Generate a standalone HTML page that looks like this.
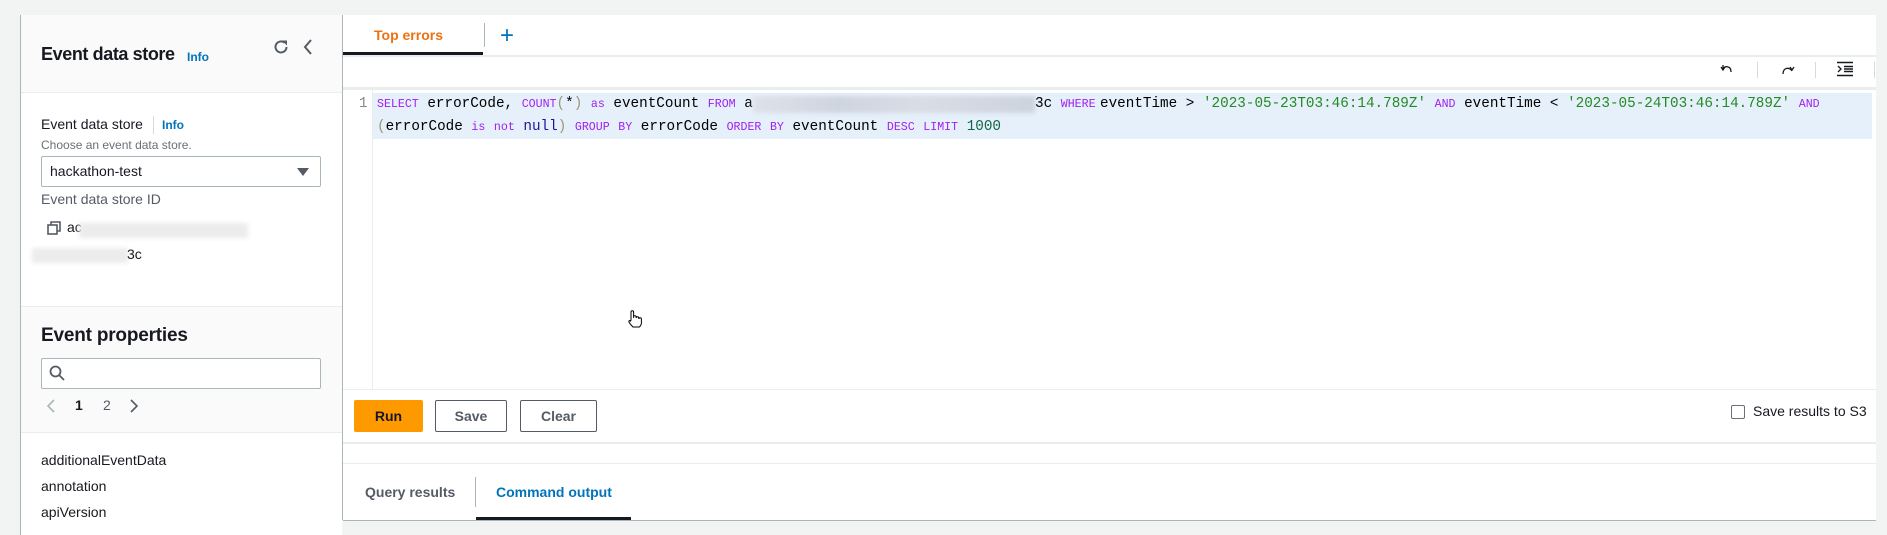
<!DOCTYPE html>
<html><head><meta charset="utf-8"><style>
*{box-sizing:border-box;margin:0;padding:0}
body{width:1887px;height:524px;background:#f2f3f3;position:relative;overflow:hidden;font-family:"Liberation Sans",sans-serif;color:#16191f}
.a{position:absolute;white-space:nowrap}
.mono{font-family:"Liberation Mono",monospace;font-size:14.3px;color:#000}
.k{color:#a020f0;font-size:11.6px;font-family:"Liberation Mono",monospace}
.s{color:#228b22}
.n{color:#116644}
.blur{position:absolute;background:linear-gradient(90deg,#dde2ea,#cfd5df 30%,#d8dde6 60%,#cdd3dd);filter:blur(2px)}
.btn{position:absolute;height:32px;border:1px solid #545b64;border-radius:2px;background:#fff;font-weight:bold;font-size:14px;color:#545b64;display:flex;align-items:center;justify-content:center}
</style></head><body>
<!-- left panel -->
<div class="a" style="left:20px;top:15px;width:322px;height:520px;background:#fff;border-left:1px solid #aab7b8"></div>
<div class="a" style="left:21px;top:15px;width:321px;height:78px;background:#fafafa;border-bottom:1px solid #eaeded"></div>
<div class="a" style="left:41px;top:44px;font-size:18px;font-weight:bold;letter-spacing:-0.4px">Event data store</div>
<div class="a" style="left:187px;top:50px;font-size:12px;font-weight:bold;color:#0073bb">Info</div>
<svg class="a" style="left:272px;top:38px" width="18" height="18" viewBox="0 0 18 18"><path d="M14.5 9A5.5 5.5 0 1 1 12.5 4.7" fill="none" stroke="#545b64" stroke-width="2"/><path d="M10 2.5h5v5z" fill="#545b64"/></svg>
<svg class="a" style="left:302px;top:38px" width="12" height="18" viewBox="0 0 12 18"><path d="M9 2L3 9l6 7" fill="none" stroke="#545b64" stroke-width="2"/></svg>
<div class="a" style="left:41px;top:116px;font-size:14px">Event data store</div>
<div class="a" style="left:153px;top:116px;width:1px;height:18px;background:#d5dbdb"></div>
<div class="a" style="left:162px;top:118px;font-size:12px;font-weight:bold;color:#0073bb">Info</div>
<div class="a" style="left:41px;top:138px;font-size:12px;color:#687078">Choose an event data store.</div>
<div class="a" style="left:41px;top:156px;width:280px;height:31px;border:1px solid #aab7b8;border-radius:2px"></div>
<div class="a" style="left:50px;top:163px;font-size:14px">hackathon-test</div>
<div class="a" style="left:297px;top:168px;width:0;height:0;border-left:6px solid transparent;border-right:6px solid transparent;border-top:8px solid #545b64"></div>
<div class="a" style="left:41px;top:191px;font-size:14px;color:#545b64">Event data store ID</div>
<svg class="a" style="left:47px;top:221px" width="14" height="14" viewBox="0 0 14 14"><rect x="1" y="4" width="9" height="9" fill="none" stroke="#545b64" stroke-width="1.6"/><path d="M4 4V1h9v9h-3" fill="none" stroke="#545b64" stroke-width="1.6"/></svg>
<div class="a" style="left:67px;top:219px;font-size:14px">ac</div>
<div class="blur" style="left:79px;top:223px;width:169px;height:15px;background:#ececec"></div>
<div class="blur" style="left:32px;top:248px;width:96px;height:15px;background:#ececec"></div>
<div class="a" style="left:127px;top:246px;font-size:14px">3c</div>
<div class="a" style="left:21px;top:306px;width:321px;height:127px;background:#fafafa;border-top:1px solid #eaeded;border-bottom:1px solid #eaeded"></div>
<div class="a" style="left:41px;top:325px;font-size:19px;font-weight:bold;letter-spacing:-0.2px">Event properties</div>
<div class="a" style="left:41px;top:358px;width:280px;height:31px;border:1px solid #aab7b8;border-radius:2px;background:#fff"></div>
<svg class="a" style="left:49px;top:365px" width="16" height="16" viewBox="0 0 16 16"><circle cx="6.5" cy="6.5" r="5" fill="none" stroke="#545b64" stroke-width="1.8"/><path d="M10 10l5 5" stroke="#545b64" stroke-width="1.8"/></svg>
<svg class="a" style="left:46px;top:398px" width="10" height="16" viewBox="0 0 10 16"><path d="M8 2L2 8l6 6" fill="none" stroke="#aab7b8" stroke-width="1.6"/></svg>
<div class="a" style="left:75px;top:397px;font-size:14px;font-weight:bold">1</div>
<div class="a" style="left:103px;top:397px;font-size:14px;color:#545b64">2</div>
<svg class="a" style="left:129px;top:398px" width="10" height="16" viewBox="0 0 10 16"><path d="M2 2l6 6-6 6" fill="none" stroke="#545b64" stroke-width="1.6"/></svg>
<div class="a" style="left:41px;top:452px;font-size:14px">additionalEventData</div>
<div class="a" style="left:41px;top:478px;font-size:14px">annotation</div>
<div class="a" style="left:41px;top:504px;font-size:14px">apiVersion</div>
<!-- main panel -->
<div class="a" style="left:342px;top:15px;width:1534px;height:505px;background:#fff;border-left:1px solid #aab7b8"></div>
<div class="a" style="left:374px;top:27px;font-size:14px;font-weight:bold;color:#ec7211">Top errors</div>
<div class="a" style="left:343px;top:52px;width:140px;height:3px;background:#16191f"></div>
<div class="a" style="left:484px;top:23px;width:1px;height:24px;background:#aab7b8"></div>
<div class="a" style="left:500px;top:24px;font-size:24px;color:#0073bb;line-height:24px">+</div>
<div class="a" style="left:343px;top:55px;width:1533px;height:2px;background:#eaeded"></div>
<svg class="a" style="left:1719px;top:61px" width="16" height="16" viewBox="0 0 16 16"><path d="M4 4v5h0M4 8c1-3 8-4 8 3" fill="none" stroke="#16191f" stroke-width="1.3"/><path d="M2 6l2 3 2-3" fill="none" stroke="#16191f" stroke-width="1.3"/></svg>
<div class="a" style="left:1757px;top:62px;width:1px;height:16px;background:#d5dbdb"></div>
<svg class="a" style="left:1780px;top:61px" width="16" height="16" viewBox="0 0 16 16"><path d="M3 13c0-7 7-7 9-3" fill="none" stroke="#16191f" stroke-width="1.3"/><path d="M10 6l2 3 2-3" fill="none" stroke="#16191f" stroke-width="1.3"/></svg>
<div class="a" style="left:1815px;top:62px;width:1px;height:16px;background:#d5dbdb"></div>
<svg class="a" style="left:1836px;top:61px" width="18" height="16" viewBox="0 0 18 16"><path d="M1 1.5h16M1 14.5h16M8 5.5h9M8 8h9M8 10.5h9" stroke="#16191f" stroke-width="1.6"/><path d="M2 5l3 3-3 3" fill="none" stroke="#16191f" stroke-width="1.3"/></svg>
<div class="a" style="left:1874px;top:62px;width:1px;height:16px;background:#d5dbdb"></div>
<div class="a" style="left:343px;top:87px;width:1533px;height:3px;background:#eaeded"></div>
<div class="a" style="left:372px;top:90px;width:1px;height:299px;background:#eaeded"></div>
<div class="a" style="left:373px;top:93px;width:1499px;height:46px;background:#e6f0fb"></div>
<div class="a mono" style="left:359px;top:96px;color:#888">1</div>
<div class="a mono" style="left:377px;top:96px"><span class="k">SELECT</span> errorCode, <span class="k">COUNT</span><span style="color:#997">(</span>*<span style="color:#997">)</span> <span class="k">as</span> eventCount <span class="k">FROM</span> a</div>
<div class="blur" style="left:753px;top:96px;width:282px;height:17px"></div>
<div class="a mono" style="left:1035px;top:96px">3c <span class="k">WHERE</span></div>
<div class="a mono" style="left:1100px;top:96px">eventTime &gt; <span class="s">'2023-05-23T03:46:14.789Z'</span> <span class="k">AND</span> eventTime &lt; <span class="s">'2023-05-24T03:46:14.789Z'</span> <span class="k">AND</span></div>
<div class="a mono" style="left:377px;top:119px"><span style="color:#997">(</span>errorCode <span class="k">is</span> <span class="k">not</span> <span style="color:#221199">null</span><span style="color:#997">)</span> <span class="k">GROUP</span> <span class="k">BY</span> errorCode <span class="k">ORDER</span> <span class="k">BY</span> eventCount <span class="k">DESC</span> <span class="k">LIMIT</span> <span class="n">1000</span></div>
<svg class="a" style="left:627px;top:309px" width="16" height="20" viewBox="0 0 16 20"><path d="M4 11V3a1.3 1.3 0 0 1 2.6 0v6l0-1a1.3 1.3 0 0 1 2.6 0v1a1.3 1.3 0 0 1 2.6 0v1a1.3 1.3 0 0 1 2.6 0v4c0 2-1 3-2 4H6c-1-1-3-3-4-5-.5-1 .5-2 1.5-1z" fill="#fff" stroke="#000" stroke-width="1"/></svg>
<div class="a" style="left:343px;top:389px;width:1533px;height:1px;background:#eaeded"></div>
<div class="a" style="left:354px;top:400px;width:69px;height:32px;background:#ff9900;border-radius:2px;font-weight:bold;font-size:14px;display:flex;align-items:center;justify-content:center">Run</div>
<div class="btn" style="left:435px;top:400px;width:72px">Save</div>
<div class="btn" style="left:520px;top:400px;width:77px">Clear</div>
<div class="a" style="left:1731px;top:405px;width:14px;height:14px;border:1px solid #687078;border-radius:2px"></div>
<div class="a" style="left:1753px;top:403px;font-size:14px">Save results to S3</div>
<div class="a" style="left:343px;top:442px;width:1533px;height:2px;background:#eaeded"></div>
<div class="a" style="left:343px;top:463px;width:1533px;height:1px;background:#eaeded"></div>
<div class="a" style="left:365px;top:484px;font-size:14px;font-weight:bold;color:#545b64">Query results</div>
<div class="a" style="left:475px;top:477px;width:1px;height:30px;background:#aab7b8"></div>
<div class="a" style="left:496px;top:484px;font-size:14px;font-weight:bold;color:#0073bb">Command output</div>
<div class="a" style="left:476px;top:517px;width:155px;height:3px;background:#16191f"></div>
<div class="a" style="left:343px;top:520px;width:1533px;height:1px;background:#aab7b8"></div>
</body></html>
